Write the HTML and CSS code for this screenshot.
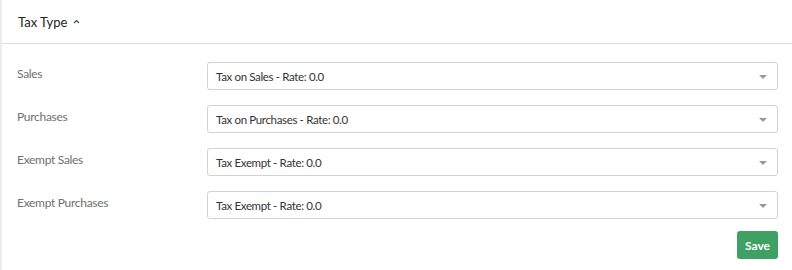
FILE: index.html
```html
<!DOCTYPE html>
<html lang="en">
<head>
  <meta charset="UTF-8">
  <title>Tax Type</title>
  <link rel="stylesheet" href="styles.css">
</head>
<body>
  <div class="panel">
    <div class="panel-head">
      <span class="panel-title">Tax Type</span>
      <svg class="chevron" width="7" height="5" viewBox="0 0 7 5"><path d="M1 4 L3.5 1.5 L6 4" fill="none" stroke="#444" stroke-width="1.1"/></svg>
    </div>

    <div class="panel-body">
      <div class="row">
        <label>Sales</label>
        <div class="select">
          <span>Tax on Sales - Rate: 0.0</span>
          <i class="caret"></i>
        </div>
      </div>
      <div class="row">
        <label>Purchases</label>
        <div class="select">
          <span>Tax on Purchases - Rate: 0.0</span>
          <i class="caret"></i>
        </div>
      </div>
      <div class="row">
        <label>Exempt Sales</label>
        <div class="select">
          <span>Tax Exempt - Rate: 0.0</span>
          <i class="caret"></i>
        </div>
      </div>
      <div class="row">
        <label>Exempt Purchases</label>
        <div class="select">
          <span>Tax Exempt - Rate: 0.0</span>
          <i class="caret"></i>
        </div>
      </div>

      <div class="actions">
        <button class="btn-save">Save</button>
      </div>
    </div>
  </div>
</body>
</html>
```

FILE: styles.css
```css
body {
  margin: 0;
  background-color: #fff;
  font-family: 'Lato', sans-serif;
  color: #333;
}

.panel {
  border-left: 2px solid #ececec;
  height: 270px;
  box-sizing: border-box;
}

.panel-head {
  height: 44px;
  box-sizing: border-box;
  border-bottom: 1px solid #dedede;
  display: flex;
  align-items: center;
  gap: 6px;
  padding-left: 16px;
}

.panel-title {
  font-size: 13px;
  color: #222;
}

.chevron {
  margin-top: -1px;
}

.panel-body {
  padding: 18px 14px 0 15px;
  display: flex;
  flex-direction: column;
  gap: 15px;
}

.row {
  display: flex;
  align-items: flex-start;
}

.row label {
  width: 190px;
  font-size: 12px;
  letter-spacing: -0.3px;
  color: #707070;
  padding-top: 4px;
}

.select {
  flex: 1;
  height: 28px;
  box-sizing: border-box;
  border: 1px solid #d2d2d2;
  border-radius: 3px;
  display: flex;
  align-items: center;
  justify-content: space-between;
  padding: 0 10px 0 8px;
  font-size: 11.5px;
  letter-spacing: -0.35px;
  color: #333;
}

.caret {
  width: 0;
  height: 0;
  border-left: 4px solid transparent;
  border-right: 4px solid transparent;
  border-top: 4px solid #999;
  margin-top: 1px;
}

.actions {
  display: flex;
  justify-content: flex-end;
  margin-top: -3px;
}

.btn-save {
  width: 41px;
  height: 28px;
  border: none;
  border-radius: 3px;
  background-color: #3fa063;
  color: #fff;
  font-family: 'Lato', sans-serif;
  font-weight: bold;
  font-size: 12px;
  padding: 0;
}
```
